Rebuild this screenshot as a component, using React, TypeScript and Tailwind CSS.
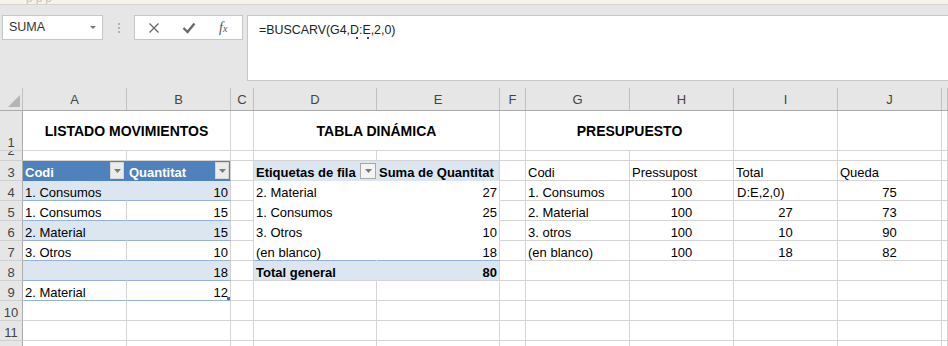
import type { ReactNode } from "react";

const GRID =
  "grid grid-cols-[23px_104px_104px_23px_123px_123px_26px_104px_104px_104px_104px_1fr]";

type CellProps = {
  children?: ReactNode;
  className?: string;
  v?: string;
  r?: string;
  b?: string;
};

function Cell({
  children,
  className = "justify-start pl-[2px]",
  v = "items-end",
  r = "border-r-[#d4d4d4]",
  b = "border-b-[#d4d4d4]",
}: CellProps) {
  return (
    <div
      className={`relative flex overflow-hidden whitespace-nowrap border-r border-b leading-[14px] ${v} ${r} ${b} ${className}`}
    >
      {children}
    </div>
  );
}

function RowHead({ n }: { n: string }) {
  return (
    <div className="flex items-end justify-center overflow-hidden border-r border-b border-r-[#ababab] border-b-[#d0d0d0] bg-[#e6e6e6] leading-[14px] text-[#444]">
      {n}
    </div>
  );
}

function Tri({ color = "#6b6b6b" }: { color?: string }) {
  return (
    <svg width="7" height="4" viewBox="0 0 7 4">
      <polygon points="0,0 7,0 3.5,4" fill={color} />
    </svg>
  );
}

function TableBtn() {
  return (
    <span className="flex h-[17px] w-[14px] items-center justify-center self-center border border-[#d6d6d6] bg-[#ececec]">
      <Tri color="#7a7a7a" />
    </span>
  );
}

function PivotBtn() {
  return (
    <span className="flex h-[16px] w-[16px] items-center justify-center self-center border border-[#a8a8a8] bg-[#f4f4f4]">
      <Tri color="#7a7a7a" />
    </span>
  );
}

const listado = [
  ["1. Consumos", "10"],
  ["1. Consumos", "15"],
  ["2. Material", "15"],
  ["3. Otros", "10"],
  ["", "18"],
  ["2. Material", "12"],
];

const pivot = [
  ["2. Material", "27"],
  ["1. Consumos", "25"],
  ["3. Otros", "10"],
  ["(en blanco)", "18"],
  ["Total general", "80"],
];

const presupuesto = [
  ["1. Consumos", "100", "D:E,2,0)", "75"],
  ["2. Material", "100", "27", "73"],
  ["3. otros", "100", "10", "90"],
  ["(en blanco)", "100", "18", "82"],
];

const columns = ["A", "B", "C", "D", "E", "F", "G", "H", "I", "J", ""];

export default function App() {
  return (
    <div className="h-[346px] w-[948px] overflow-hidden bg-[#e6e6e6] font-['Liberation_Sans',Arial,sans-serif] text-[13px] text-black">
      {/* top strip of the ribbon, cut off */}
      <div className="h-[5px] overflow-hidden border-b border-[#d4d4d4] bg-[#f6f3ea] pl-[26px]">
        <div className="-mt-[11px] text-[12px] tracking-[3px] text-[#c9c4b8]">ppp</div>
      </div>

      {/* name box + formula bar */}
      <div className="flex h-[83px] items-start pl-[2px] pt-[10px]">
        <div className="flex h-[25px] w-[101px] items-center justify-between border border-[#c6c6c6] bg-white pl-[6px] pr-[6px] text-[12.5px] text-[#333]">
          <span>SUMA</span>
          <svg width="6" height="3" viewBox="0 0 6 3">
            <polygon points="0,0 6,0 3,3" fill="#777" />
          </svg>
        </div>
        <div className="flex h-[25px] w-[31px] flex-col items-center justify-center gap-[2px]">
          <span className="h-[2px] w-[2px] bg-[#b3b3b3]" />
          <span className="h-[2px] w-[2px] bg-[#b3b3b3]" />
          <span className="h-[2px] w-[2px] bg-[#b3b3b3]" />
        </div>
        <div className="flex h-[25px] w-[109px] items-center border border-[#c6c6c6] bg-white pl-[13px]">
          <svg width="12" height="12" viewBox="0 0 12 12">
            <path d="M1.5 1.5 L10.5 10.5 M10.5 1.5 L1.5 10.5" stroke="#6a6a6a" strokeWidth="1.4" />
          </svg>
          <svg className="ml-[22px]" width="14" height="12" viewBox="0 0 14 12">
            <polyline points="1.5,6 5.5,10 12.5,1.5" fill="none" stroke="#6a6a6a" strokeWidth="2.4" />
          </svg>
          <span className="ml-[23px] font-['Liberation_Serif',serif] text-[14px] italic leading-none text-[#555]">
            f<span className="text-[10px]">x</span>
          </span>
        </div>
        <div className="relative ml-[4px] h-[66px] flex-1 border-t border-b border-l border-[#c6c6c6] bg-white pl-[11px] pt-[6px] text-[12.4px] leading-[16px] text-[#222]">
          =BUSCARV(G4,D:E,2,0)
          <span className="absolute left-[108px] top-[21px] h-[2px] w-[2px] bg-[#3b3b8f]" />
          <span className="absolute left-[119px] top-[21px] h-[2px] w-[2px] bg-[#3b3b8f]" />
        </div>
      </div>

      {/* column header */}
      <div className={`${GRID} h-[23px] border-b border-[#ababab] bg-[#e6e6e6] text-[#444]`}>
        <div className="flex items-end justify-end border-r border-[#c0c0c0] pb-[3px] pr-[2px]">
          <svg width="12" height="12" viewBox="0 0 12 12">
            <polygon points="12,0 12,12 0,12" fill="#b4b4b4" />
          </svg>
        </div>
        {columns.map((c, i) => (
          <div
            key={i}
            className="flex items-center justify-center border-r border-[#c0c0c0] pt-[1px] leading-[16px]"
          >
            {c}
          </div>
        ))}
      </div>

      <div className="bg-white">
        {/* row 1: titles */}
        <div className={`${GRID} h-[40px]`}>
          <RowHead n="1" />
          <Cell className="col-span-2 justify-center pt-[13px] text-[14px] font-bold" v="items-start">
            LISTADO MOVIMIENTOS
          </Cell>
          <Cell />
          <Cell className="col-span-2 justify-center pt-[13px] text-[14px] font-bold" v="items-start">
            TABLA DINÁMICA
          </Cell>
          <Cell />
          <Cell className="col-span-2 justify-center pt-[13px] text-[14px] font-bold" v="items-start">
            PRESUPUESTO
          </Cell>
          <Cell />
          <Cell />
          <Cell />
        </div>

        {/* row 2: very short */}
        <div className={`${GRID} h-[10px]`}>
          <div className="flex justify-center overflow-hidden border-r border-b border-r-[#ababab] border-b-[#d0d0d0] bg-[#e6e6e6] leading-[16px] text-[#444]">
            <span className="-mt-[8px]">2</span>
          </div>
          {Array.from({ length: 11 }).map((_, i) => (
            <Cell key={i} />
          ))}
        </div>

        {/* row 3: headers */}
        <div className={`${GRID} h-[20px]`}>
          <RowHead n="3" />
          <Cell
            className="justify-between bg-[#4f81bd] pl-[2px] pr-[2px] font-bold text-white"
            r="border-r-[#4f81bd]"
            b="border-b-[#4f81bd]"
          >
            <span>Codi</span>
            <TableBtn />
          </Cell>
          <Cell
            className="justify-between bg-[#4f81bd] pl-[2px] pr-[1px] font-bold text-white"
            b="border-b-[#4f81bd]"
          >
            <span>Quantitat</span>
            <TableBtn />
          </Cell>
          <Cell />
          <Cell
            className="justify-between bg-[#dce6f1] pl-[2px] pr-[0px] font-bold"
            r="border-r-[#dce6f1]"
            b="border-b-[#dce6f1]"
          >
            <span>Etiquetas de fila</span>
            <PivotBtn />
          </Cell>
          <Cell className="justify-start bg-[#dce6f1] pl-[2px] font-bold" b="border-b-[#dce6f1]">
            Suma de Quantitat
          </Cell>
          <Cell />
          <Cell>Codi</Cell>
          <Cell>Pressupost</Cell>
          <Cell>Total</Cell>
          <Cell>Queda</Cell>
          <Cell />
        </div>

        {/* rows 4 - 12 */}
        {Array.from({ length: 9 }).map((_, i) => {
          const l = listado[i];
          const p = pivot[i];
          const q = presupuesto[i];
          const banded = i % 2 === 0;
          const isTotal = i === 4;
          return (
            <div key={i} className={`${GRID} h-[20px]`}>
              <RowHead n={String(i + 4)} />

              {l ? (
                <>
                  <Cell
                    className={banded ? "justify-start bg-[#dce6f1] pl-[2px]" : "justify-start pl-[2px]"}
                    r={banded ? "border-r-[#dce6f1]" : "border-r-[#d4d4d4]"}
                    b="border-b-[#95b3d7]"
                  >
                    {l[0]}
                  </Cell>
                  <Cell
                    className={banded ? "justify-end bg-[#dce6f1] pr-[2px]" : "justify-end pr-[2px]"}
                    b="border-b-[#95b3d7]"
                  >
                    {l[1]}
                    {i === 5 && (
                      <span className="absolute bottom-0 right-0 h-[3px] w-[3px] bg-[#4a68a8]" />
                    )}
                  </Cell>
                </>
              ) : (
                <>
                  <Cell />
                  <Cell />
                </>
              )}

              <Cell />

              {p ? (
                <>
                  <Cell
                    className={isTotal ? "justify-start bg-[#dce6f1] pl-[2px] font-bold" : "justify-start pl-[2px]"}
                    r={isTotal ? "border-r-[#dce6f1]" : "border-r-white"}
                    b={i === 3 ? "border-b-[#95b3d7]" : isTotal ? "border-b-[#d4d4d4]" : "border-b-white"}
                  >
                    {p[0]}
                  </Cell>
                  <Cell
                    className={isTotal ? "justify-end bg-[#dce6f1] pr-[2px] font-bold" : "justify-end pr-[2px]"}
                    b={i === 3 ? "border-b-[#95b3d7]" : isTotal ? "border-b-[#d4d4d4]" : "border-b-white"}
                  >
                    {p[1]}
                  </Cell>
                </>
              ) : (
                <>
                  <Cell />
                  <Cell />
                </>
              )}

              <Cell />

              {q ? (
                <>
                  <Cell>{q[0]}</Cell>
                  <Cell className="justify-center">{q[1]}</Cell>
                  <Cell className={i === 0 ? "justify-start pl-[3px]" : "justify-center"}>{q[2]}</Cell>
                  <Cell className="justify-center">{q[3]}</Cell>
                </>
              ) : (
                <>
                  <Cell />
                  <Cell />
                  <Cell />
                  <Cell />
                </>
              )}

              <Cell />
            </div>
          );
        })}
      </div>
    </div>
  );
}
